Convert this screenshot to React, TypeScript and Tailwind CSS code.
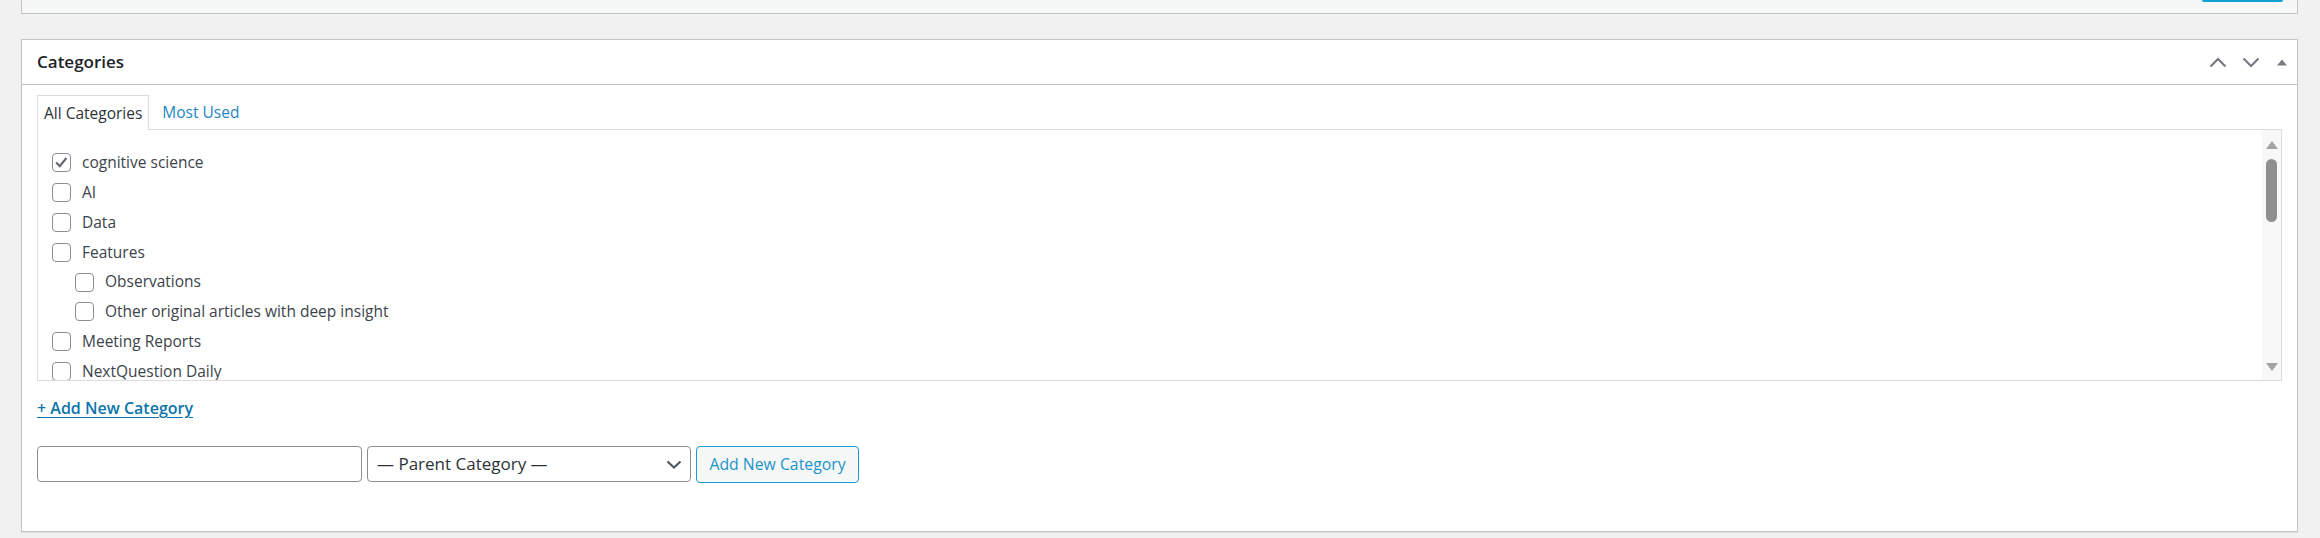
import { useState } from "react";

const cats = [
  { name: "cognitive science", level: 0, checked: true },
  { name: "AI", level: 0 },
  { name: "Data", level: 0 },
  { name: "Features", level: 0 },
  { name: "Observations", level: 1 },
  { name: "Other original articles with deep insight", level: 1 },
  { name: "Meeting Reports", level: 0 },
  { name: "NextQuestion Daily", level: 0 },
];

function Check({ on }: { on?: boolean }) {
  return (
    <span className="flex items-center justify-center w-[19px] h-[19px] shrink-0 rounded-[4px] border border-[#8c8f94] bg-white">
      {on ? (
        <svg viewBox="0 0 19 19" className="w-[17px] h-[17px]">
          <polyline points="3.5,9.5 7.5,13.5 15,4.5" fill="none" stroke="#646970" strokeWidth="2.4" />
        </svg>
      ) : null}
    </span>
  );
}

export default function App() {
  const [tab, setTab] = useState("all");
  return (
    <div className="min-h-[538px] bg-[#f1f1f1] pl-[21px] pr-[22px] font-['Open_Sans',sans-serif] text-[#3c434a]">
      {/* top box, mostly out of view */}
      <div className="h-[14px] border-x border-b border-[#c3c4c7] bg-[#f6f7f7] flex justify-end">
        <div className="w-[81px] h-[2px] bg-[#0ea1d3] mr-[14px] rounded-b-[2px]" />
      </div>

      {/* Categories box */}
      <div className="mt-[25px] border border-[#c3c4c7] bg-white shadow-[0_1px_1px_rgba(0,0,0,0.06)]">
        <div className="flex items-center justify-between h-[45px] pl-[15px] border-b border-[#c3c4c7]">
          <h2 className="text-[17px] font-semibold text-[#1d2327]">Categories</h2>
          <div className="flex items-center h-full">
            <button className="w-[33px] h-full flex items-center justify-center">
              <svg width="18" height="11" viewBox="0 0 18 11">
                <path d="M1.5 9.5 L9 2 L16.5 9.5" fill="none" stroke="#787c82" strokeWidth="2.2" />
              </svg>
            </button>
            <button className="w-[33px] h-full flex items-center justify-center">
              <svg width="18" height="11" viewBox="0 0 18 11">
                <path d="M1.5 1.5 L9 9 L16.5 1.5" fill="none" stroke="#787c82" strokeWidth="2.2" />
              </svg>
            </button>
            <button className="w-[30px] h-full flex items-center justify-center">
              <svg width="10" height="7" viewBox="0 0 10 7">
                <path d="M0 6.5 L5 0.5 L10 6.5 Z" fill="#787c82" />
              </svg>
            </button>
          </div>
        </div>

        <div className="pt-[10px] px-[15px] pb-[48px]">
          <div className="flex items-end text-[15.5px]">
            <button
              onClick={() => setTab("all")}
              className={`relative z-10 -mb-px h-[35px] px-[6px] pt-[2px] border border-b-0 border-[#dcdcde] bg-white ${tab === "all" ? "text-[#2c3338]" : "text-[#2486c2]"}`}
            >
              All Categories
            </button>
            <button
              onClick={() => setTab("pop")}
              className={`h-[34px] pl-[13px] pt-[2px] ${tab === "pop" ? "text-[#2c3338]" : "text-[#2486c2]"}`}
            >
              Most Used
            </button>
          </div>

          <div className="flex h-[252px] border border-[#dcdcde] overflow-hidden">
            <ul className="flex-1 pt-[18px] pl-[14px] text-[15.5px] text-[#3c434a]">
              {cats.map((c) => (
                <li key={c.name} className={`flex items-center h-[29.8px] gap-[11px] ${c.level ? "pl-[23px] gap-[10px]" : ""}`}>
                  <Check on={c.checked} />
                  <span>{c.name}</span>
                </li>
              ))}
            </ul>
            <div className="w-[19px] bg-[#f8f8f8] flex flex-col items-center pt-[11px] pb-[9px]">
              <svg width="12" height="8" viewBox="0 0 12 8">
                <path d="M0 8 L6 0 L12 8 Z" fill="#a3a3a3" />
              </svg>
              <div className="mt-[10px] w-[11px] h-[63px] rounded-full bg-[#8f8f8f]" />
              <div className="flex-1" />
              <svg width="12" height="8" viewBox="0 0 12 8">
                <path d="M0 0 L12 0 L6 8 Z" fill="#a3a3a3" />
              </svg>
            </div>
          </div>

          <div className="mt-[17px] h-[20px] flex items-center">
            <a href="#" className="text-[16px] font-semibold text-[#0b75ab] underline underline-offset-[3px]">
              + Add New Category
            </a>
          </div>

          <div className="mt-[28px] flex gap-[5px]">
            <input className="w-[325px] h-[36px] rounded-[4px] border border-[#8c8f94] bg-white px-2 text-[15px] outline-none" />
            <div className="relative w-[324px] h-[36px]">
              <select className="w-full h-full appearance-none rounded-[4px] border border-[#8c8f94] bg-white pl-[9px] text-[17px] text-[#2c3338] outline-none">
                <option>— Parent Category —</option>
              </select>
              <svg className="pointer-events-none absolute right-[9px] top-[14px]" width="16" height="9" viewBox="0 0 16 9">
                <path d="M1.5 1.5 L8 7.5 L14.5 1.5" fill="none" stroke="#50575e" strokeWidth="2.2" />
              </svg>
            </div>
            <button className="w-[163px] h-[37px] rounded-[4px] border border-[#139fd0] bg-[#f6f7f7] text-[15.8px] text-[#1a94c9]">
              Add New Category
            </button>
          </div>
        </div>
      </div>
    </div>
  );
}
